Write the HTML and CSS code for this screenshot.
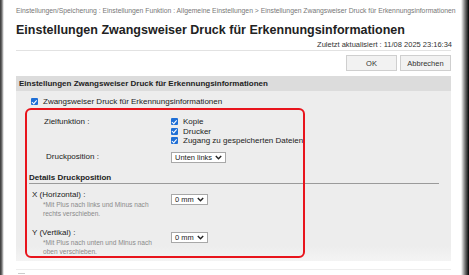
FILE: index.html
```html
<!DOCTYPE html>
<html lang="de">
<head>
  <meta charset="UTF-8">
  <title>Einstellungen Zwangsweiser Druck für Erkennungsinformationen</title>
  <link rel="stylesheet" href="styles.css">
</head>
<body>
  <div class="page">
    <div class="top-head">
      <div class="crumbs">Einstellungen/Speicherung : Einstellungen Funktion : Allgemeine Einstellungen &gt; Einstellungen Zwangsweiser Druck für Erkennungsinformationen</div>
      <h1 class="page-title">Einstellungen Zwangsweiser Druck für Erkennungsinformationen</h1>
      <div class="updated">Zuletzt aktualisiert : 11/08 2025 23:16:34</div>
    </div>

    <div class="btn-row">
      <button class="act-btn">OK</button>
      <button class="act-btn">Abbrechen</button>
    </div>

    <div class="panel">
      <div class="panel-head">Einstellungen Zwangsweiser Druck für Erkennungsinformationen</div>
      <div class="panel-body">
        <label class="chk main-chk"><span class="box"></span>Zwangsweiser Druck für Erkennungsinformationen</label>

        <div class="form-row first-row">
          <div class="lbl">Zielfunktion :</div>
          <div class="chk-list">
            <label class="chk"><span class="box"></span>Kopie</label>
            <label class="chk"><span class="box"></span>Drucker</label>
            <label class="chk"><span class="box"></span>Zugang zu gespeicherten Dateien</label>
          </div>
        </div>

        <div class="form-row pos-row">
          <div class="lbl">Druckposition :</div>
          <div class="sel sel-wide">Unten links
            <svg class="chev" width="7" height="5" viewBox="0 0 7 5"><path d="M0.8 1 L3.5 3.8 L6.2 1" fill="none" stroke="#222" stroke-width="1.4"/></svg>
          </div>
        </div>

        <div class="sub-head">Details Druckposition</div>

        <div class="form-row xy-row">
          <div class="lbl">
            <div class="axis">X (Horizontal) :</div>
            <div class="note">*Mit Plus nach links und Minus nach rechts verschieben.</div>
          </div>
          <div class="sel sel-mm">0 mm
            <svg class="chev" width="7" height="5" viewBox="0 0 7 5"><path d="M0.8 1 L3.5 3.8 L6.2 1" fill="none" stroke="#222" stroke-width="1.4"/></svg>
          </div>
        </div>

        <div class="form-row xy-row">
          <div class="lbl">
            <div class="axis">Y (Vertikal) :</div>
            <div class="note">*Mit Plus nach unten und Minus nach oben verschieben.</div>
          </div>
          <div class="sel sel-mm">0 mm
            <svg class="chev" width="7" height="5" viewBox="0 0 7 5"><path d="M0.8 1 L3.5 3.8 L6.2 1" fill="none" stroke="#222" stroke-width="1.4"/></svg>
          </div>
        </div>
      </div>
      <div class="mark-box"></div>
    </div>

    <div class="foot">
      <svg width="7" height="6" viewBox="0 0 7 6"><path d="M0 0.5 H7 M3.5 2 L0.8 5.5 H6.2 Z" fill="#ccc" stroke="#ccc" stroke-width="1"/></svg>
    </div>
  </div>
</body>
</html>
```

FILE: styles.css
```css
body {
  margin: 0;
  font-family: 'Liberation Sans', Arial, sans-serif;
  color: #222;
  background: linear-gradient(to right, #333 0, #777 2px, #c8c8c8 3px, #fff 4px, #fff 461px, #777 465px, #000 469px);
  min-height: 275px;
}

.page {
  padding: 0 18px 0 16px;
}

.top-head {
  border-bottom: 1px solid #e2e2e2;
  padding-top: 6px;
}

.crumbs {
  font-size: 6.8px;
  line-height: 10px;
  color: #777;
  white-space: nowrap;
}

.page-title {
  font-size: 12.5px;
  font-weight: 700;
  margin: 6px 0 0;
  line-height: 17px;
}

.updated {
  text-align: right;
  font-size: 7.5px;
  line-height: 10px;
  color: #333;
  margin-top: 1px;
  margin-right: -1px;
}

.btn-row {
  display: flex;
  justify-content: flex-end;
  gap: 3px;
  margin-top: 4px;
}

.act-btn {
  width: 51px;
  height: 16px;
  padding: 0;
  background: #f2f2f2;
  border: 1px solid #cfcfcf;
  font-family: inherit;
  font-size: 7.5px;
  color: #333;
}

.panel {
  position: relative;
  margin-top: 5px;
  background: linear-gradient(to bottom, #ededed 0, #ededed 92%, #f4f4f4 100%);
}

.panel-head {
  background: #dcdcdc;
  font-size: 8px;
  font-weight: 700;
  line-height: 15px;
  padding-left: 3px;
}

.panel-body {
  padding: 5px 6px 4px 0;
}

.chk {
  display: flex;
  align-items: center;
  gap: 5px;
  font-size: 8px;
  line-height: 9.5px;
}

.box {
  width: 7px;
  height: 7px;
  background: #1f6fd6;
  border-radius: 1px;
  position: relative;
  flex-shrink: 0;
}

.box::after {
  content: '';
  position: absolute;
  left: 2.2px;
  top: 0.6px;
  width: 1.6px;
  height: 3.6px;
  border: solid #fff;
  border-width: 0 1.2px 1.2px 0;
  transform: rotate(40deg);
}

.main-chk {
  margin-left: 15px;
  line-height: 11px;
}

.form-row {
  display: grid;
  grid-template-columns: 155px auto;
  align-items: start;
}

.lbl {
  font-size: 8px;
  line-height: 10px;
}

.first-row {
  margin-top: 10px;
}

.first-row .lbl {
  padding-left: 28px;
}

.pos-row {
  margin-top: 6px;
  align-items: center;
}

.pos-row .lbl {
  padding-left: 30px;
}

.sel {
  display: flex;
  align-items: center;
  justify-content: space-between;
  height: 11px;
  padding: 0 3px 0 3px;
  background: #fff;
  border: 1px solid #a8a8a8;
  font-size: 7.5px;
  color: #222;
  box-sizing: border-box;
}

.sel-wide {
  width: 55px;
}

.sel-mm {
  width: 37px;
  margin-top: 4px;
}

.sub-head {
  margin: 10px 6px 0 13px;
  font-size: 8px;
  font-weight: 700;
  line-height: 10px;
  padding-bottom: 0;
  border-bottom: 1.5px solid #9a9a9a;
}

.xy-row {
  margin-top: 6px;
}

.xy-row + .xy-row {
  margin-top: 9px;
}

.axis {
  padding-left: 16px;
  font-size: 8px;
  line-height: 10px;
}

.note {
  padding-left: 27px;
  width: 118px;
  font-size: 6.6px;
  line-height: 9.5px;
  color: #8a8a8a;
}

.mark-box {
  position: absolute;
  left: 9px;
  top: 32px;
  width: 280px;
  height: 150px;
  border: 2px solid #e8141c;
  border-radius: 6px;
  box-sizing: border-box;
}

.foot {
  margin-top: 8px;
  border-top: 1px solid #eee;
  padding: 3px 0 0 2px;
}

.foot svg {
  display: block;
}
```
